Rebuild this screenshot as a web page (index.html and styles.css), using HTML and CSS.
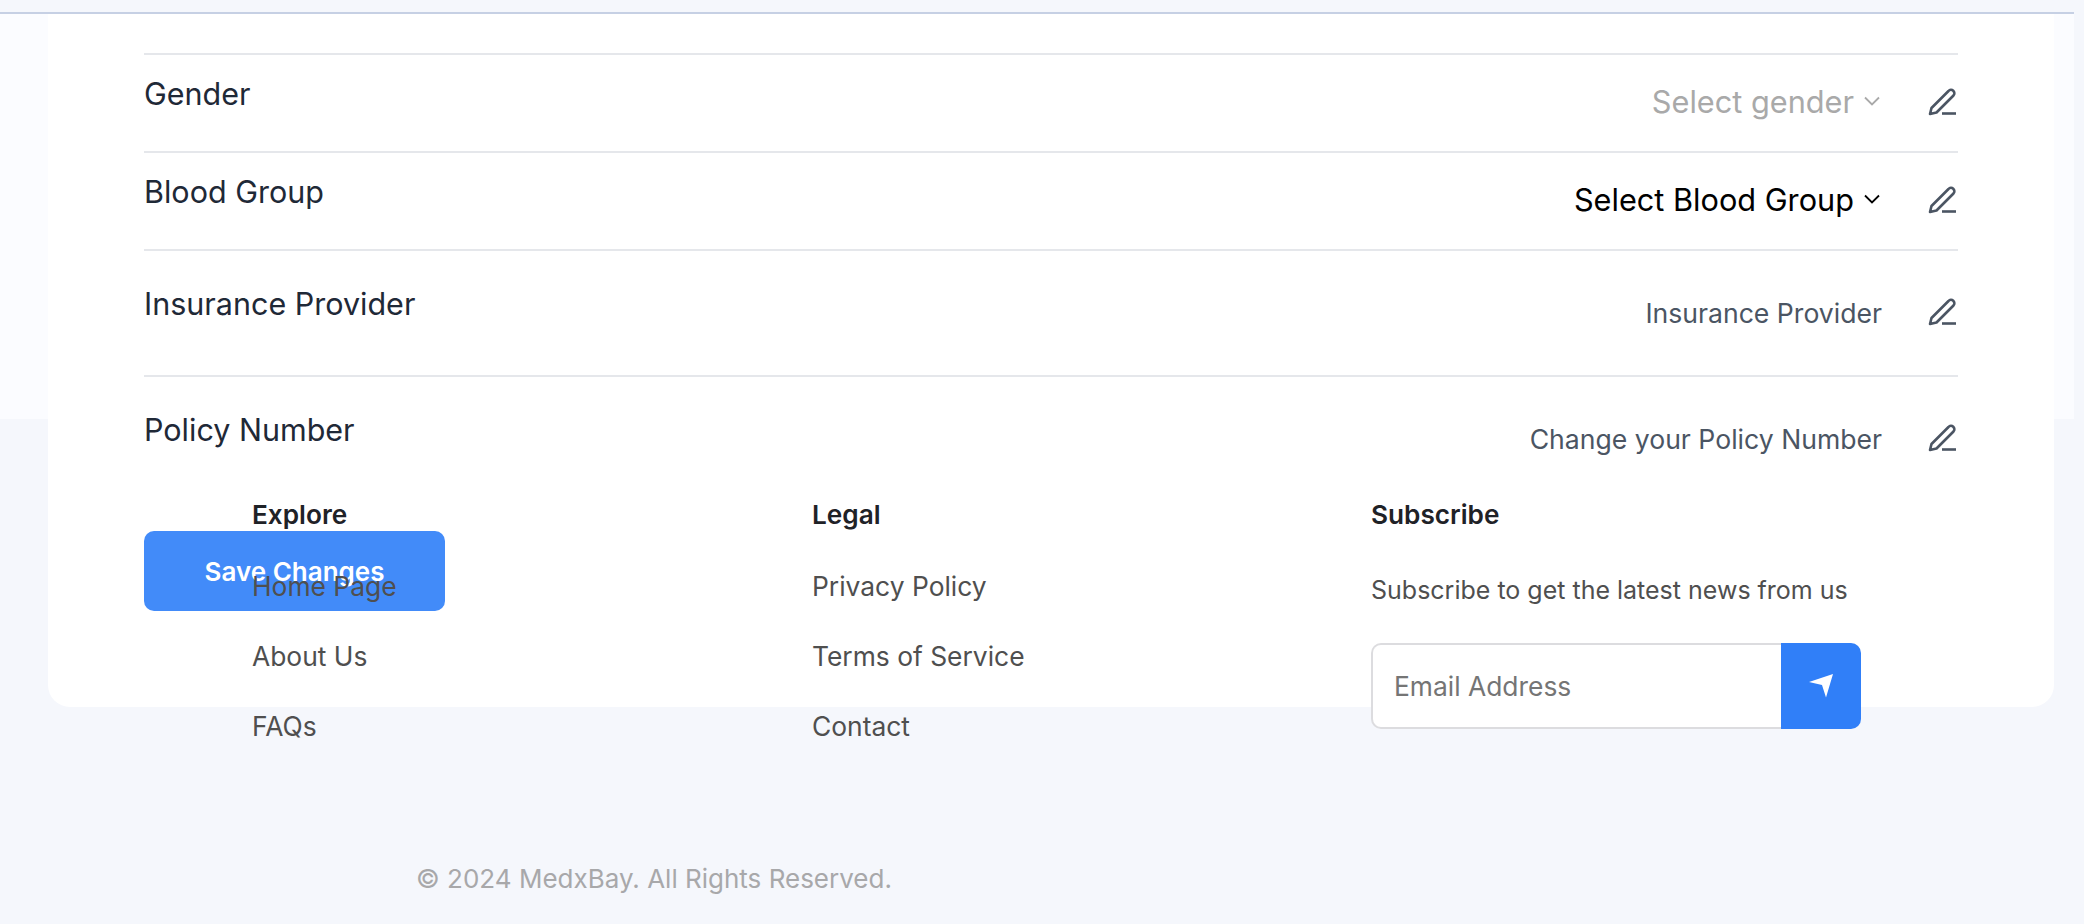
FILE: index.html
```html
<!DOCTYPE html>
<html lang="en">
<head>
<meta charset="utf-8">
<title>MedxBay Profile</title>
<link rel="stylesheet" href="styles.css">
</head>
<body>
<svg class="sprite" width="0" height="0" aria-hidden="true">
  <symbol id="pen" viewBox="0 0 30 28">
    <path d="M2 26 L3.5 20 L20.5 3 A3.2 3.2 0 0 1 25.5 7.5 L8.5 24.5 Z" fill="none" stroke="currentColor" stroke-width="2.6" stroke-linejoin="round"/>
    <path d="M14 25.5 H28" fill="none" stroke="currentColor" stroke-width="2.6"/>
  </symbol>
  <symbol id="chev" viewBox="0 0 16 10">
    <path d="M1 1.5 L8 8.5 L15 1.5" fill="none" stroke="currentColor" stroke-width="1.8"/>
  </symbol>
</svg>
<div class="topbar"></div>
<main class="panel">
  <section class="card">
    <div class="row row-short">
      <div class="label">Gender</div>
      <div class="value">
        <span class="select muted">Select gender <svg class="chev"><use href="#chev"/></svg></span>
        <svg class="pen"><use href="#pen"/></svg>
      </div>
    </div>
    <div class="row row-short">
      <div class="label">Blood Group</div>
      <div class="value">
        <span class="select dark">Select Blood Group <svg class="chev"><use href="#chev"/></svg></span>
        <svg class="pen"><use href="#pen"/></svg>
      </div>
    </div>
    <div class="row row-tall">
      <div class="label label-low">Insurance Provider</div>
      <div class="value value-text">
        <span class="text">Insurance Provider</span>
        <svg class="pen"><use href="#pen"/></svg>
      </div>
    </div>
    <div class="row row-last">
      <div class="label label-low">Policy Number</div>
      <div class="value value-text">
        <span class="text">Change your Policy Number</span>
        <svg class="pen"><use href="#pen"/></svg>
      </div>
    </div>
    <button class="save" type="button">Save Changes</button>
  </section>
</main>
<footer class="footer">
  <div class="cols">
    <div class="col">
      <h4>Explore</h4>
      <a href="#">Home Page</a>
      <a href="#">About Us</a>
      <a href="#">FAQs</a>
    </div>
    <div class="col">
      <h4>Legal</h4>
      <a href="#">Privacy Policy</a>
      <a href="#">Terms of Service</a>
      <a href="#">Contact</a>
    </div>
    <div class="col">
      <h4>Subscribe</h4>
      <p>Subscribe to get the latest news from us</p>
      <form class="sub">
        <input type="text" placeholder="Email Address">
        <button type="button" aria-label="Send">
          <svg width="26" height="26" viewBox="0 0 26 26"><path d="M1 9 L25 1 L18 24.5 L14 12 Z" fill="#fff"/></svg>
        </button>
      </form>
    </div>
  </div>
  <p class="copy">© 2024 MedxBay. All Rights Reserved.</p>
</footer>
</body>
</html>
```
FILE: styles.css
```css
* { box-sizing: border-box; }
html, body { margin: 0; padding: 0; }
body {
  background: #f5f7fc;
  font-family: Inter, "Liberation Sans", sans-serif;
  width: 2084px;
  height: 924px;
  overflow: hidden;
}
.sprite { position: absolute; }
.topbar {
  width: 2074px;
  height: 14px;
  border-bottom: 2px solid #c6d0e4;
}
.panel {
  width: 2074px;
  height: 405px;
  background: #fbfcff;
  padding: 0 20px 0 48px;
}
.card {
  height: 693px;
  background: #fff;
  border-radius: 0 0 22px 22px;
  padding: 39px 96px 0;
}
.row {
  display: flex;
  justify-content: space-between;
  align-items: flex-start;
  border-top: 2px solid #e5e7eb;
}
.row-short { height: 98px; }
.row-tall { height: 126px; }
.row-last { height: 156px; }
.label {
  font-size: 30.5px;
  line-height: 40px;
  color: #1f2937;
  padding-top: 19px;
}
.label-low { padding-top: 33px; }
.value {
  display: flex;
  align-items: center;
  padding-top: 23px;
  height: 69px;
}
.value-text { padding-top: 42px; height: 80px; }
.select { font-size: 30.7px; display: flex; align-items: center; gap: 10px; margin-right: 2px; }
.muted { color: #a9a9a9; }
.dark { color: #000; }
.text { font-size: 26.6px; color: #4b5563; margin-top: 2px; }
.chev { width: 16px; height: 10px; }
.muted .chev { color: #a9a9a9; }
.pen { width: 30px; height: 28px; color: #4b5563; margin-left: 46px; }
.select + .pen { margin-top: 2px; }
.save {
  display: block;
  width: 301px;
  height: 80px;
  border: 0;
  border-radius: 10px;
  background: #428bf9;
  color: #fff;
  font: 600 26px Inter, "Liberation Sans", sans-serif;
}
.footer { margin-top: 78px; }
.cols {
  display: grid;
  grid-template-columns: 560px 559px 600px;
  padding-left: 252px;
}
.col h4 {
  margin: 0 0 35px;
  font-size: 26.2px;
  line-height: 36px;
  font-weight: 600;
  color: #1f2227;
}
.col a {
  display: block;
  font-size: 26.4px;
  line-height: 36px;
  margin-bottom: 34px;
  color: #4f4f4f;
  text-decoration: none;
}
.col p {
  margin: 39px 0 35px;
  font-size: 25px;
  line-height: 36px;
  color: #4f4f4f;
}
.sub { display: flex; width: 490px; height: 86px; }
.sub input {
  flex: 1;
  min-width: 0;
  border: 2px solid #dcdcdf;
  border-right: 0;
  border-radius: 10px 0 0 10px;
  padding: 0 0 0 21px;
  font: 26.4px Inter, "Liberation Sans", sans-serif;
  background: #fff;
}
.sub input::placeholder { color: #757575; }
.sub button {
  width: 80px;
  border: 0;
  border-radius: 0 10px 10px 0;
  background: #307ff8;
  display: flex;
  align-items: center;
  justify-content: center;
}
.copy {
  margin: 83px 0 0 416px;
  font-size: 26px;
  line-height: 36px;
  color: #a8a8aa;
}
```
